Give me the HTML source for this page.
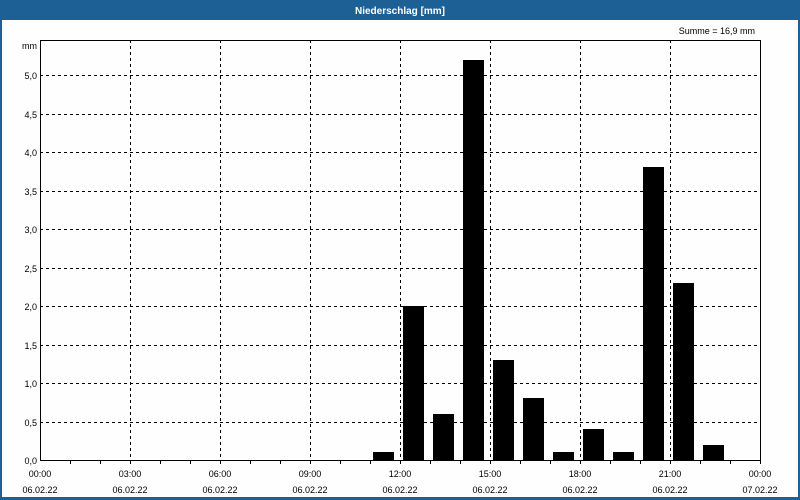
<!DOCTYPE html>
<html><head><meta charset="utf-8"><style>
html,body{margin:0;padding:0;background:#fdfefd;}
svg{display:block;font-family:"Liberation Sans",sans-serif;}
</style></head><body>
<svg width="800" height="500" xmlns="http://www.w3.org/2000/svg">
<rect x="0" y="0" width="800" height="500" fill="#fdfefd"/>
<rect x="0" y="0" width="800" height="20" fill="#1d6096"/>
<rect x="0" y="20" width="2" height="480" fill="#1d6096"/>
<rect x="798" y="20" width="2" height="480" fill="#1d6096"/>
<rect x="0" y="497" width="800" height="3" fill="#1d6096"/>
<text x="400" y="14" fill="#fff" font-size="10" font-weight="bold" text-anchor="middle">Niederschlag [mm]</text>
<text x="755" y="34" fill="#000" font-size="9" text-anchor="end">Summe = 16,9 mm</text>
<g stroke="#000" stroke-width="1" stroke-dasharray="3,3" fill="none" shape-rendering="crispEdges">
<line x1="40" y1="75.5" x2="760" y2="75.5"/>
<line x1="40" y1="114.5" x2="760" y2="114.5"/>
<line x1="40" y1="152.5" x2="760" y2="152.5"/>
<line x1="40" y1="191.5" x2="760" y2="191.5"/>
<line x1="40" y1="229.5" x2="760" y2="229.5"/>
<line x1="40" y1="268.5" x2="760" y2="268.5"/>
<line x1="40" y1="306.5" x2="760" y2="306.5"/>
<line x1="40" y1="345.5" x2="760" y2="345.5"/>
<line x1="40" y1="383.5" x2="760" y2="383.5"/>
<line x1="40" y1="422.5" x2="760" y2="422.5"/>
<line x1="130.5" y1="40" x2="130.5" y2="460"/>
<line x1="220.5" y1="40" x2="220.5" y2="460"/>
<line x1="310.5" y1="40" x2="310.5" y2="460"/>
<line x1="400.5" y1="40" x2="400.5" y2="460"/>
<line x1="490.5" y1="40" x2="490.5" y2="460"/>
<line x1="580.5" y1="40" x2="580.5" y2="460"/>
<line x1="670.5" y1="40" x2="670.5" y2="460"/>
</g>
<g fill="#000" shape-rendering="crispEdges">
<rect x="373" y="452" width="21" height="8"/>
<rect x="403" y="306" width="21" height="154"/>
<rect x="433" y="414" width="21" height="46"/>
<rect x="463" y="60" width="21" height="400"/>
<rect x="493" y="360" width="21" height="100"/>
<rect x="523" y="398" width="21" height="62"/>
<rect x="553" y="452" width="21" height="8"/>
<rect x="583" y="429" width="21" height="31"/>
<rect x="613" y="452" width="21" height="8"/>
<rect x="643" y="167" width="21" height="293"/>
<rect x="673" y="283" width="21" height="177"/>
<rect x="703" y="445" width="21" height="15"/>
</g>
<g stroke="#000" stroke-width="1" fill="none" shape-rendering="crispEdges">
<polyline points="40.5,460 40.5,40.5 760.5,40.5 760.5,460.5 40,460.5"/>
<path d="M70.5 460v4M100.5 460v4M130.5 460v4M160.5 460v4M190.5 460v4M220.5 460v4M250.5 460v4M280.5 460v4M310.5 460v4M340.5 460v4M370.5 460v4M400.5 460v4M430.5 460v4M460.5 460v4M490.5 460v4M520.5 460v4M550.5 460v4M580.5 460v4M610.5 460v4M640.5 460v4M670.5 460v4M700.5 460v4M730.5 460v4M760.5 460v4"/>
</g>
<g font-size="9" fill="#000" text-anchor="end">
<text x="37" y="49">mm</text>
<text x="37" y="79">5,0</text>
<text x="37" y="118">4,5</text>
<text x="37" y="156">4,0</text>
<text x="37" y="195">3,5</text>
<text x="37" y="233">3,0</text>
<text x="37" y="272">2,5</text>
<text x="37" y="310">2,0</text>
<text x="37" y="349">1,5</text>
<text x="37" y="387">1,0</text>
<text x="37" y="426">0,5</text>
<text x="37" y="464">0,0</text>
</g>
<g font-size="9" fill="#000" text-anchor="middle">
<text x="40" y="477">00:00</text><text x="40" y="493">06.02.22</text>
<text x="130" y="477">03:00</text><text x="130" y="493">06.02.22</text>
<text x="220" y="477">06:00</text><text x="220" y="493">06.02.22</text>
<text x="310" y="477">09:00</text><text x="310" y="493">06.02.22</text>
<text x="400" y="477">12:00</text><text x="400" y="493">06.02.22</text>
<text x="490" y="477">15:00</text><text x="490" y="493">06.02.22</text>
<text x="580" y="477">18:00</text><text x="580" y="493">06.02.22</text>
<text x="670" y="477">21:00</text><text x="670" y="493">06.02.22</text>
<text x="760" y="477">00:00</text><text x="760" y="493">07.02.22</text>
</g>
</svg>
</body></html>
